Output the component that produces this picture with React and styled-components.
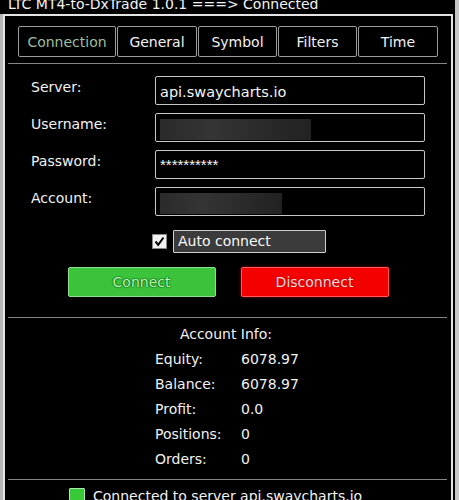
import React from "react";
import styled, { createGlobalStyle } from "styled-components";

const Global = createGlobalStyle`
  html, body { margin: 0; padding: 0; background: #c6c6c6; height: 500px; overflow: hidden; }
  body { font-family: "DejaVu Sans", "Liberation Sans", sans-serif; font-size: 14px; color: #f2f2f2; }
  * { box-sizing: border-box; }
`;

const Window = styled.div`
  width: 455px;
  height: 500px;
  display: flex;
  flex-direction: column;
  background: #000;
  overflow: hidden;
`;

const TitleBar = styled.div`
  flex-shrink: 0;
  height: 14px;
  overflow: hidden;
  padding-left: 8px;
  background: #000;
`;

const TitleText = styled.div`
  margin-top: -4px;
  line-height: 16px;
  font-size: 14px;
  color: #f4f4f4;
  white-space: nowrap;
`;

const Frame = styled.div`
  flex: 1 0 auto;
  display: flex;
  background: #000;
  border-left: 3px solid #b6b6b6;
`;

const Panel = styled.div`
  width: 450px;
  border: 2px solid #e4e4e4;
  border-bottom: none;
  background: #000;
  padding-top: 10px;
  display: flex;
  flex-direction: column;
`;

const Tabs = styled.div`
  display: flex;
  gap: 1px;
  padding-left: 13px;
`;

const Tab = styled.div`
  width: ${(p) => p.$w}px;
  height: 31px;
  border: 1px solid #9c9c9c;
  border-radius: 2px;
  display: flex;
  align-items: center;
  justify-content: center;
  color: ${(p) => (p.$active ? "#9dbf9d" : "#f2f2f2")};
  font-size: 14px;
`;

const Separator = styled.div`
  flex-shrink: 0;
  height: 1px;
  background: #858585;
  margin: ${(p) => p.$mt}px 4px 0 3px;
`;

const Form = styled.div`
  display: flex;
  flex-direction: column;
  gap: 8px;
  padding: 12px 0 0 26px;
`;

const FormRow = styled.div`
  display: flex;
  align-items: flex-start;
`;

const Label = styled.div`
  width: 124px;
  padding-top: 3px;
  line-height: 17px;
  font-size: 14px;
  color: #f2f2f2;
`;

const Field = styled.div`
  width: 270px;
  height: 29px;
  flex-shrink: 0;
  border: 1px solid #c8c8c8;
  border-radius: 2px;
  padding: 2px 0 0 4px;
  line-height: 24px;
  font-size: ${(p) => (p.$small ? "15px" : "14.5px")};
  font-family: ${(p) => (p.$small ? '"Liberation Sans", sans-serif' : "inherit")};
  color: #f6f6f6;
  display: flex;
  align-items: ${(p) => (p.$small ? "flex-start" : "center")};
`;

const Redacted = styled.div`
  width: ${(p) => p.$w}px;
  height: 21px;
  margin-top: 2px;
  background: linear-gradient(90deg, #2b2b2b 0%, #343434 35%, #2a2a2a 70%, #222 100%);
`;

const AutoRow = styled.div`
  display: flex;
  align-items: center;
  gap: 6px;
  padding-left: 147px;
  margin-top: 14px;
`;

const CheckBox = styled.div`
  width: 15px;
  height: 15px;
  background: #f2f2f2;
  border: 1px solid #888;
  display: flex;
  align-items: center;
  justify-content: center;
`;

const AutoLabel = styled.div`
  width: 153px;
  height: 23px;
  background: #3b3b3b;
  border: 1px solid #cfcfcf;
  border-radius: 1px;
  padding-left: 4px;
  line-height: 21px;
  font-size: 14px;
  color: #fafafa;
`;

const Buttons = styled.div`
  display: flex;
  justify-content: center;
  gap: 25px;
  margin-top: 14px;
`;

const Button = styled.div`
  width: 148px;
  height: 30px;
  border-radius: 2px;
  display: flex;
  align-items: center;
  justify-content: center;
  font-size: 14px;
  background: ${(p) => (p.$kind === "ok" ? "#3bc43b" : "#f40000")};
  border: 1px solid ${(p) => (p.$kind === "ok" ? "#8ee08e" : "#ff5a5a")};
  color: ${(p) => (p.$kind === "ok" ? "#b8ffb8" : "#ffd8d8")};
  text-shadow: ${(p) =>
    p.$kind === "ok"
      ? "0 0 1px #0a4a0a, 0 0 1px #0a4a0a, 0 0 2px #0f600f"
      : "0 0 2px #8a0000"};
  box-shadow: ${(p) => (p.$kind === "ok" ? "none" : "0 0 3px #a00000")};
`;

const Info = styled.div`
  padding-top: 4px;
  display: flex;
  flex-direction: column;
`;

const InfoTitle = styled.div`
  text-align: center;
  line-height: 25px;
  font-size: 14px;
  padding-right: 4px;
`;

const InfoGrid = styled.div`
  display: grid;
  grid-template-columns: 86px auto;
  padding-left: 150px;
  line-height: 25px;
  font-size: 14px;
`;

const Status = styled.div`
  display: flex;
  align-items: flex-start;
  gap: 8px;
  padding: 8px 0 0 64px;
`;

const Led = styled.div`
  width: 16px;
  height: 18px;
  background: #38c838;
  border: 1px solid #a8e8a8;
  border-radius: 1px;
`;

const StatusText = styled.div`
  line-height: 17px;
  font-size: 14px;
  color: #f2f2f2;
`;

const tabs = [
  ["Connection", 98],
  ["General", 80],
  ["Symbol", 79],
  ["Filters", 79],
  ["Time", 80],
];

const info = [
  ["Equity:", "6078.97"],
  ["Balance:", "6078.97"],
  ["Profit:", "0.0"],
  ["Positions:", "0"],
  ["Orders:", "0"],
];

export default function App() {
  return (
    <>
      <Global />
      <Window>
        <TitleBar>
          <TitleText>LTC MT4-to-DxTrade 1.0.1 ===&gt; Connected</TitleText>
        </TitleBar>
        <Frame>
          <Panel>
            <Tabs>
              {tabs.map(([t, w], i) => (
                <Tab key={t} $w={w} $active={i === 0}>
                  {t}
                </Tab>
              ))}
            </Tabs>
            <Separator $mt={6} />
            <Form>
              <FormRow>
                <Label>Server:</Label>
                <Field>api.swaycharts.io</Field>
              </FormRow>
              <FormRow>
                <Label>Username:</Label>
                <Field>
                  <Redacted $w={151} />
                </Field>
              </FormRow>
              <FormRow>
                <Label>Password:</Label>
                <Field $small>**********</Field>
              </FormRow>
              <FormRow>
                <Label>Account:</Label>
                <Field>
                  <Redacted $w={122} />
                </Field>
              </FormRow>
            </Form>
            <AutoRow>
              <CheckBox>
                <svg width="11" height="11" viewBox="0 0 11 11">
                  <path d="M1.5 5.5 L4.2 8.8 L9.5 1.5" fill="none" stroke="#000" strokeWidth="2" />
                </svg>
              </CheckBox>
              <AutoLabel>Auto connect</AutoLabel>
            </AutoRow>
            <Buttons>
              <Button $kind="ok">Connect</Button>
              <Button $kind="bad">Disconnect</Button>
            </Buttons>
            <Separator $mt={20} />
            <Info>
              <InfoTitle>Account Info:</InfoTitle>
              <InfoGrid>
                {info.map(([k, v]) => (
                  <React.Fragment key={k}>
                    <span>{k}</span>
                    <span>{v}</span>
                  </React.Fragment>
                ))}
              </InfoGrid>
            </Info>
            <Separator $mt={7} />
            <Status>
              <Led />
              <StatusText>Connected to server api.swaycharts.io</StatusText>
            </Status>
          </Panel>
        </Frame>
      </Window>
    </>
  );
}
